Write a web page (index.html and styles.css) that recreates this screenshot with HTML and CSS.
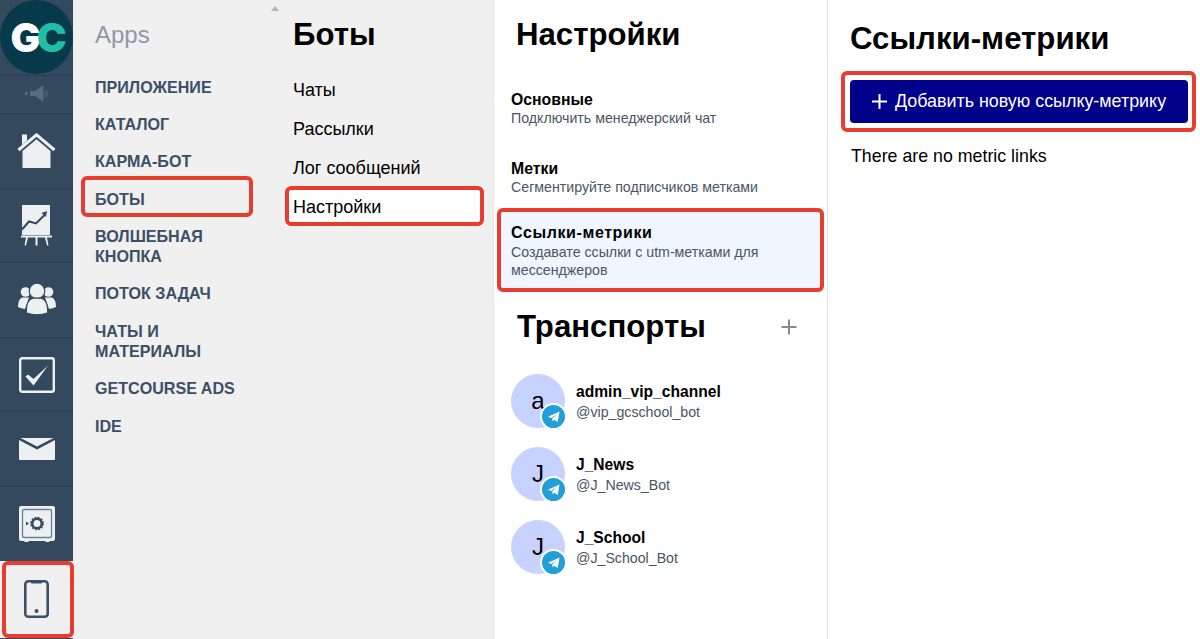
FILE: index.html
```html
<!DOCTYPE html>
<html lang="ru">
<head>
<meta charset="utf-8">
<title>Ссылки-метрики</title>
<link rel="stylesheet" href="styles.css">
</head>
<body>
<div class="app">
  <aside class="rail">
    <div class="logo"><span class="logo-g">G</span><span class="logo-c">C</span></div>
    <div class="rail-item rail-sound">
      <svg width="23" height="15" viewBox="0 0 23 15"><g fill="#566a80"><rect x="0" y="6" width="2.500" height="3"/><rect x="5" y="5" width="5" height="5"/><path d="M10 5l7-5h1.500v15H17l-7-5z"/></g><path d="M20 4.500q2 3 0 6M21.200 3q3 4.500 0 9" fill="none" stroke="#566a80" stroke-width=".8"/></svg>
    </div>
    <div class="rail-item">
      <svg width="39" height="36" viewBox="0 0 39 36"><path d="M5 1.500h5v6l-5 4.500z" fill="#ecf0f1"/><path d="M1.500 17 19.500 1.800 37.500 17" fill="none" stroke="#ecf0f1" stroke-width="3"/><path d="M5.500 18 19.500 6.300 33.500 18v17h-28z" fill="#ecf0f1"/></svg>
    </div>
    <div class="rail-item">
      <svg width="32" height="41" viewBox="0 0 32 41"><path d="M1 0h28v30H1z" fill="#ecf0f1"/><path d="M1 24.500 8 16.500l7 2 8.500-8.500" fill="none" stroke="#34495e" stroke-width="2"/><path d="M20.500 8 26 6l-1 6z" fill="#34495e"/><path d="M0 30.500h31v2H0zM5 32.500h2l-2 8H3.500zM14.500 32.500h2v8h-2zM24 32.500h2l1.500 8H26z" fill="#ecf0f1"/></svg>
    </div>
    <div class="rail-item">
      <svg width="38" height="33" viewBox="0 0 38 33"><g fill="#ecf0f1"><circle cx="7.500" cy="9" r="4.800"/><circle cx="30.500" cy="9" r="4.800"/><path d="M0 24q0-8 4-9.500h7l-4 11.500q-4-.5-7-2zM38 24q0-8-4-9.500h-7l4 11.500q4-.5 7-2z"/></g><g fill="#ecf0f1" stroke="#34495e" stroke-width="1.200"><circle cx="19" cy="8" r="7.800"/><path d="M8.500 30q-1-12 6-14.800h9q7 2.800 6 14.800-10.500 3.500-21 0z"/></g></svg>
    </div>
    <div class="rail-item">
      <svg width="36" height="36" viewBox="0 0 36 36"><rect x="1.200" y="1.200" width="33.600" height="33.600" rx="2" fill="none" stroke="#ecf0f1" stroke-width="2.400"/><path d="M6.500 19.500l2.500-2 5.500 4.500L29 8.500 14.500 28.500z" fill="#ecf0f1"/></svg>
    </div>
    <div class="rail-item">
      <svg width="36" height="22" viewBox="0 0 36 22"><path d="M0 2l18 9.500L36 2v19a1 1 0 0 1-1 1H1a1 1 0 0 1-1-1z" fill="#ecf0f1"/><path d="M1.500 0h33L18 8.500z" fill="#ecf0f1"/></svg>
    </div>
    <div class="rail-item">
      <svg width="36" height="36" viewBox="0 0 36 36"><path d="M2 0h32a2 2 0 0 1 2 2v31a2 2 0 0 1-2 2h-3l-1 1h-3l-1-1H10l-1 1H6l-1-1H2a2 2 0 0 1-2-2V2a2 2 0 0 1 2-2z" fill="#ecf0f1"/><rect x="3.500" y="3.500" width="29" height="28" rx="2" fill="none" stroke="#6d8093" stroke-width="1.300"/><circle cx="18" cy="17.500" r="4.800" fill="none" stroke="#34495e" stroke-width="2.600"/><circle cx="18" cy="17.500" r="6.300" fill="none" stroke="#34495e" stroke-width="1.200" stroke-dasharray="1.800 1.500"/><path d="M7 15.500l3 2-3 2z" fill="#34495e"/></svg>
    </div>
    <div class="rail-item rail-active anno anno-phone">
      <svg width="25" height="38" viewBox="0 0 25 38"><rect x="1.300" y="1.300" width="22.400" height="35.400" rx="3" fill="none" stroke="#3c506a" stroke-width="2.600"/><path d="M7 1h11v1.500a1 1 0 0 1-1 1H8a1 1 0 0 1-1-1z" fill="#3c506a"/><circle cx="12.500" cy="31" r="2" fill="#3c506a"/></svg>
    </div>
  </aside>

  <nav class="apps">
    <div class="apps-title">Apps</div>
    <ul class="apps-list">
      <li>Приложение</li>
      <li>Каталог</li>
      <li>Карма-бот</li>
      <li class="anno anno-bots">Боты</li>
      <li>Волшебная кнопка</li>
      <li>Поток задач</li>
      <li>Чаты и материалы</li>
      <li>GetCourse ADS</li>
      <li>IDE</li>
    </ul>
    <div class="scroll-track"><span class="scroll-up"></span></div>
  </nav>

  <section class="bots">
    <h1 class="title">Боты</h1>
    <ul class="bots-list">
      <li>Чаты</li>
      <li>Рассылки</li>
      <li>Лог сообщений</li>
      <li class="bots-active anno anno-settings">Настройки</li>
    </ul>
  </section>

  <section class="settings">
    <h1 class="title settings-title">Настройки</h1>
    <div class="setting first">
      <div class="setting-name">Основные</div>
      <div class="setting-desc">Подключить менеджерский чат</div>
    </div>
    <div class="setting">
      <div class="setting-name">Метки</div>
      <div class="setting-desc">Сегментируйте подписчиков метками</div>
    </div>
    <div class="setting setting-active anno anno-metric">
      <div class="setting-name">Ссылки-метрики</div>
      <div class="setting-desc">Создавате ссылки с utm-метками для мессенджеров</div>
    </div>
    <div class="transport-head">
      <h1 class="title">Транспорты</h1>
      <svg width="16" height="16" viewBox="0 0 16 16"><path d="M7 .5h2V7h6.500v2H9v6.500H7V9H.5V7H7z" fill="#8a8a8a"/></svg>
    </div>
    <div class="bot">
      <div class="avatar">a<span class="tg"><svg width="12" height="12" viewBox="0 0 13 13"><path d="M0 6.300 12.500.5 10.500 12 6.500 9.500 5 11.500 4.500 8 10 3 3.500 7.500z" fill="#fff"/></svg></span></div>
      <div class="bot-text"><div class="bot-name">admin_vip_channel</div><div class="bot-handle">@vip_gcschool_bot</div></div>
    </div>
    <div class="bot">
      <div class="avatar">J<span class="tg"><svg width="12" height="12" viewBox="0 0 13 13"><path d="M0 6.300 12.500.5 10.500 12 6.500 9.500 5 11.500 4.500 8 10 3 3.500 7.500z" fill="#fff"/></svg></span></div>
      <div class="bot-text"><div class="bot-name">J_News</div><div class="bot-handle">@J_News_Bot</div></div>
    </div>
    <div class="bot">
      <div class="avatar">J<span class="tg"><svg width="12" height="12" viewBox="0 0 13 13"><path d="M0 6.300 12.500.5 10.500 12 6.500 9.500 5 11.500 4.500 8 10 3 3.500 7.500z" fill="#fff"/></svg></span></div>
      <div class="bot-text"><div class="bot-name">J_School</div><div class="bot-handle">@J_School_Bot</div></div>
    </div>
  </section>

  <main class="metrics">
    <h1 class="title metrics-title">Ссылки-метрики</h1>
    <button class="add-btn anno anno-add" type="button">
      <svg width="15" height="15" viewBox="0 0 15 15"><path d="M6.500 0h2v6.500H15v2H8.500V15h-2V8.500H0v-2h6.500z" fill="#fff"/></svg>
      <span>Добавить новую ссылку-метрику</span>
    </button>
    <p class="empty">There are no metric links</p>
  </main>
</div>
</body>
</html>
```

FILE: styles.css
```css
* { box-sizing: border-box; }
html, body { margin: 0; height: 100%; }
body {
  background: #fff;
  color: #000;
  font-family: "Liberation Sans", Arial, sans-serif;
  overflow: hidden;
}
ul { list-style: none; margin: 0; padding: 0; }

.app { display: flex; width: 1200px; height: 639px; }

/* annotation frames */
.anno { position: relative; }
.anno::after {
  content: "";
  position: absolute;
  border: 4px solid #e83c2f;
  border-radius: 6px;
  pointer-events: none;
}
.anno-phone::after { left: 2px; right: -1px; top: 0; bottom: 0; }
.anno-bots::after { left: -14px; right: 2px; top: -13px; bottom: -8px; }
.anno-settings::after { left: 0; right: 0; top: 0; bottom: 0; }
.anno-metric::after { left: 0; right: 0; top: 0; bottom: 0; }
.anno-add::after { left: -9px; right: -8px; top: -9px; bottom: -9px; }

/* rail */
.rail {
  width: 74px;
  flex: none;
  display: flex;
  flex-direction: column;
  background: #34495e;
  border-right: 1px solid #e8edf0;
}
.logo {
  height: 74px;
  flex: none;
  width: 73px;
  margin-bottom: 1px;
  border-radius: 50%;
  background: #063a4b;
  display: flex;
  align-items: center;
  justify-content: center;
  font-family: Inter, "Liberation Sans", sans-serif;
  font-weight: 900;
  font-size: 40px;
  letter-spacing: -4px;
}
.logo-g { color: #fff; }
.logo-c { color: #1fbfa6; }
.rail-item {
  height: 74.600px;
  flex: none;
  display: flex;
  align-items: center;
  justify-content: center;
  border-top: 1px solid #2b3e52;
}
.rail-sound { height: 38px; padding-bottom: 3px; }
.rail-active { height: 77px; background: #f0f0f0; border-top: 0; }

/* apps */
.apps {
  width: 208px;
  flex: none;
  background: #f0f0f0;
  position: relative;
  padding: 21px 0 0 21px;
  display: flex;
  flex-direction: column;
}
.apps-title {
  font-size: 24px;
  line-height: 28px;
  color: #8c99a8;
  margin-bottom: 28px;
}
.apps-list {
  width: 160px;
  font-size: 16.100px;
  font-weight: 700;
  line-height: 20.500px;
  color: #3c4f66;
  text-transform: uppercase;
  display: flex;
  flex-direction: column;
  gap: 16.700px;
}
.scroll-track {
  position: absolute;
  right: 0;
  top: 0;
  bottom: 0;
  width: 14px;
  display: flex;
  justify-content: center;
  padding-top: 6px;
}
.scroll-up {
  width: 0;
  height: 0;
  border-left: 4px solid transparent;
  border-right: 4px solid transparent;
  border-bottom: 5px solid #b4b4b4;
}

/* bots */
.title {
  margin: 0;
  font-size: 31.200px;
  line-height: 36px;
  font-weight: 700;
}
.bots {
  width: 211px;
  flex: none;
  background: #f0f0f0;
  padding: 17px 8px 0 3px;
}
.bots > .title { padding-left: 8px; }
.bots-list { margin-top: 18px; font-size: 18px; }
.bots-list li {
  height: 39px;
  line-height: 39px;
  padding-left: 8px;
}
.bots-list .bots-active {
  background: #fff;
  height: 40px;
  line-height: 42px;
  width: 199px;
  margin-top: -2px;
}

/* settings */
.settings {
  width: 335px;
  flex: none;
  border-left: 1px solid #e6e6e6;
  border-right: 1px solid #e6e6e6;
  padding: 17px 3px 0 3px;
}
.settings-title { padding-left: 19px; }
.setting { padding: 0 14px; margin-top: 31px; }
.setting.first { margin-top: 37px; }
.setting-name { font-size: 15.800px; font-weight: 700; line-height: 20px; }
.setting-desc { font-size: 14.200px; line-height: 17.500px; color: #4b5563; }
.setting-active { background: #eff6ff; padding: 15px 14px 0; margin-top: 12px; height: 84px; }
.setting-active .setting-name { font-size: 16px; letter-spacing: .6px; margin-bottom: 1px; }
.transport-head {
  display: flex;
  align-items: center;
  justify-content: space-between;
  padding: 0 27px 0 20px;
  margin-top: 17px;
  margin-bottom: 29px;
}
.bot { display: flex; align-items: center; gap: 11px; padding-left: 14px; height: 54px; margin-bottom: 19px; }
.avatar {
  width: 54px;
  height: 54px;
  flex: none;
  border-radius: 50%;
  background: #c7d2fe;
  position: relative;
  display: flex;
  align-items: center;
  justify-content: center;
  font-size: 24px;
}
.tg {
  position: absolute;
  right: -2px;
  bottom: -2px;
  width: 27px;
  height: 27px;
  border-radius: 50%;
  background: #229ed9;
  border: 2px solid #fff;
  display: flex;
  align-items: center;
  justify-content: center;
}
.bot-text { padding-top: 2px; }
.bot-name { font-size: 15.600px; font-weight: 700; line-height: 20px; }
.bot-handle { font-size: 14.200px; line-height: 20px; color: #4b5563; }

/* metrics */
.metrics { flex: 1; padding: 21px 12px 0 22px; }
.add-btn {
  display: flex;
  align-items: center;
  justify-content: center;
  gap: 8px;
  width: 338px;
  height: 43px;
  margin-top: 23px;
  background: #00008b;
  color: #fff;
  border: 0;
  border-radius: 4px;
  font: inherit;
  font-size: 17.900px;
}
.empty { margin: 23px 0 0 1px; font-size: 17.800px; line-height: 20px; }
```
